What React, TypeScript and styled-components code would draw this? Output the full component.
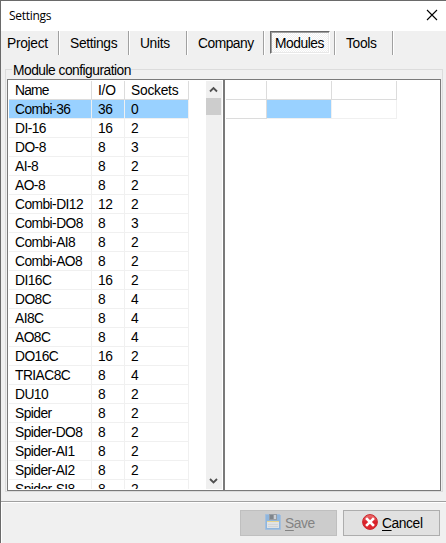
import React from "react";
import styled, { createGlobalStyle } from "styled-components";

const GlobalStyle = createGlobalStyle`
  *, *::before, *::after { box-sizing: border-box; }
  body {
    margin: 0;
    background: #f0f0f0;
    overflow: hidden;
    color: #000;
    font-family: "Liberation Sans", Arial, sans-serif;
    font-size: 13.8px;
  }
`;

const Window = styled.div`
  width: 446px;
  height: 543px;
  display: flex;
  flex-direction: column;
  background: #f0f0f0;
  border-top: 1px solid #6a6a6a;
  border-left: 1px solid #6a6a6a;
  overflow: hidden;
`;

const TitleBar = styled.header`
  height: 30px;
  flex: none;
  display: flex;
  justify-content: space-between;
  align-items: center;
  padding: 0 8px;
  background: #fff;
  font: 12px/30px "Open Sans", "Noto Sans", sans-serif;
  letter-spacing: -0.3px;
`;

const CloseIcon = styled.svg`
  width: 12px;
  height: 12px;
  display: block;
  margin-top: -2px;
`;

const TabBar = styled.nav`
  height: 32px;
  flex: none;
  display: flex;
  align-items: flex-start;
`;

const TabSlot = styled.div<{ $width: number }>`
  width: ${(p) => p.$width}px;
  height: 24px;
  display: flex;
  border-right: 1px solid #fff;
  box-shadow: inset -1px 0 0 #a0a0a0;
`;

const Tab = styled.button<{ $inset: number; $spacing: number }>`
  border: 0;
  background: none;
  padding: 0 0 0 ${(p) => p.$inset}px;
  font: inherit;
  line-height: 23px;
  letter-spacing: ${(p) => p.$spacing}px;
  color: #000;
  white-space: nowrap;
`;

const PressedTab = styled(Tab)`
  width: 60px;
  height: 23px;
  margin-left: 5px;
  text-align: left;
  border: 1px solid;
  border-color: #696969 #fff #fff #696969;
  box-shadow: inset 1px 1px 0 #a0a0a0, inset -1px -1px 0 #e8e8e8;
  background: repeating-conic-gradient(#fff 0 25%, #f0f0f0 0 50%) 0 0 / 2px 2px;
`;

const GroupBox = styled.section`
  width: 438px;
  height: 429px;
  flex: none;
  margin-left: 4px;
  display: grid;
  grid-template-rows: 16px 413px;
`;

const GroupTitle = styled.div`
  display: flex;
  align-items: center;
  line-height: 16px;
  letter-spacing: -0.51px;
  white-space: nowrap;

  &::before, &::after {
    content: "";
    height: 10px;
    align-self: flex-end;
    border-top: 1px solid #dcdcdc;
  }
  &::before {
    width: 7px;
    border-left: 1px solid #dcdcdc;
    margin-right: 1px;
  }
  &::after {
    flex: 1;
    border-right: 1px solid #dcdcdc;
  }
`;

const GroupBody = styled.div`
  display: grid;
  grid-template-columns: 217px 217px;
  border: 1px solid #dcdcdc;
  border-top: 0;
  padding: 0 1px 0;
`;

const Panel = styled.div`
  height: 412px;
  display: flex;
  align-items: flex-start;
  background: #fff;
  border: 1px solid #7a7a7a;
  padding: 1px;
  overflow: hidden;
`;

const ModuleGrid = styled.div`
  width: 197px;
  height: 408px;
  flex: none;
  overflow: hidden;
`;

const Row = styled.div<{ $selected?: boolean }>`
  display: grid;
  grid-template-columns: 83px 33px 64px;
  height: 19px;
  background: ${(p) => (p.$selected ? "#99d1ff" : "#fff")};
  width: 180px;
`;

const Cell = styled.div<{ $tight?: boolean }>`
  padding-left: 6px;
  line-height: 20px;
  height: 19px;
  letter-spacing: ${(p) => (p.$tight ? "-0.55px" : "-0.35px")};
  border-right: 1px solid #f0f0f0;
  border-bottom: 1px solid #f0f0f0;
  white-space: nowrap;
`;

const HeadCell = styled(Cell)`
  border-color: #dcdcdc;
  letter-spacing: ${(p) => (p.$tight ? "-0.8px" : "-0.25px")};
`;

const ScrollBar = styled.div`
  width: 16px;
  height: 408px;
  flex: none;
  display: flex;
  flex-direction: column;
  background: #f0f0f0;
`;

const ScrollThumb = styled.div`
  width: 15px;
  height: 17px;
  background: #cdcdcd;
`;

const ScrollArrow = styled.svg<{ $down?: boolean }>`
  width: 15px;
  height: 17px;
  display: block;
  flex: none;
  margin-top: ${(p) => (p.$down ? "auto" : "0")};
`;

const SocketGrid = styled.div`
  display: grid;
  grid-template-columns: 41px 65px 65px;
  grid-auto-rows: 19px;
`;

const SocketCell = styled.div<{ $fixed?: boolean; $selected?: boolean }>`
  border-right: 1px solid ${(p) => (p.$fixed ? "#dcdcdc" : "#f0f0f0")};
  border-bottom: 1px solid ${(p) => (p.$fixed ? "#dcdcdc" : "#f0f0f0")};
  background: ${(p) => (p.$selected ? "#99d1ff" : "#fff")};
  background-clip: padding-box;
`;

const Footer = styled.footer`
  flex: 1;
  margin-top: 9px;
  border-top: 1px solid #a0a0a0;
  box-shadow: inset 1px 1px 0 #fff;
  display: flex;
  justify-content: flex-end;
  align-items: flex-start;
  gap: 6px;
  padding: 8px 6px 0 0;
`;

const Button = styled.button`
  width: 97px;
  height: 26px;
  display: flex;
  align-items: center;
  padding: 0 0 0 18px;
  gap: 4px;
  border: 1px solid #adadad;
  background: #e1e1e1;
  font: inherit;
  letter-spacing: -0.4px;
  color: #000;
  &:disabled {
    padding-left: 24px;
    border-color: #bfbfbf;
    background: #ccc;
    color: #838383;
  }
`;

const ButtonIcon = styled.svg`
  width: 16px;
  height: 16px;
  flex: none;
  margin-top: -2px;
`;

const Mnemonic = styled.span`
  text-decoration: underline;
  text-decoration-thickness: 1px;
  text-underline-offset: 2px;
`;

const tabs = [
  { label: "Project", width: 59, inset: 6, spacing: -0.3 },
  { label: "Settings", width: 70, inset: 10, spacing: -0.32 },
  { label: "Units", width: 58, inset: 10, spacing: -0.35 },
  { label: "Company", width: 77, inset: 10, spacing: -0.5 },
  { label: "Modules", width: 71, inset: 4, spacing: -0.45, pressed: true },
  { label: "Tools", width: 58, inset: 10, spacing: -0.3 },
];

const modules: [string, number, number][] = [
  ["Combi-36", 36, 0],
  ["DI-16", 16, 2],
  ["DO-8", 8, 3],
  ["AI-8", 8, 2],
  ["AO-8", 8, 2],
  ["Combi-DI12", 12, 2],
  ["Combi-DO8", 8, 3],
  ["Combi-AI8", 8, 2],
  ["Combi-AO8", 8, 2],
  ["DI16C", 16, 2],
  ["DO8C", 8, 4],
  ["AI8C", 8, 4],
  ["AO8C", 8, 4],
  ["DO16C", 16, 2],
  ["TRIAC8C", 8, 4],
  ["DU10", 8, 2],
  ["Spider", 8, 2],
  ["Spider-DO8", 8, 2],
  ["Spider-AI1", 8, 2],
  ["Spider-AI2", 8, 2],
  ["Spider-SI8", 8, 2],
];

const SaveIcon = () => (
  <ButtonIcon viewBox="0 0 16 16">
    <path d="M.5 .5h14l1 1v14H.5z" fill="#8fb6de" stroke="#a3bfdd" />
    <path d="M4 0h8v6H4z" fill="#989da3" />
    <path d="M5 1h3v4H5z" fill="#7f858b" />
    <path d="M9 1h2v4H9z" fill="#cbd0d6" />
    <path d="M2 7h12v7H2z" fill="#e1e3e5" />
    <path d="M2 7h12v1H2z" fill="#e8d48e" />
    <path d="M3 10.5h10M3 12.5h10" stroke="#d2d5d8" />
  </ButtonIcon>
);

const CancelIcon = () => (
  <ButtonIcon viewBox="0 0 16 16">
    <defs>
      <linearGradient id="cancelFill" x1="0" y1="0" x2="0" y2="1">
        <stop offset="0" stopColor="#ef7777" />
        <stop offset=".5" stopColor="#d92029" />
        <stop offset="1" stopColor="#e32b30" />
      </linearGradient>
    </defs>
    <circle cx="8" cy="8" r="7.4" fill="url(#cancelFill)" stroke="#c9252b" />
    <path d="M5 5l6 6M11 5l-6 6" stroke="#fff" strokeWidth="2.6" strokeLinecap="square" />
  </ButtonIcon>
);

export default function App() {
  return (
    <>
      <GlobalStyle />
      <Window>
        <TitleBar>
          <span>Settings</span>
          <CloseIcon viewBox="0 0 12 12">
            <path d="M1 1l10 10M11 1L1 11" stroke="#000" strokeWidth="1.1" />
          </CloseIcon>
        </TitleBar>
        <TabBar>
          {tabs.map((t) => {
            const Part = t.pressed ? PressedTab : Tab;
            return (
              <TabSlot key={t.label} $width={t.width}>
                <Part $inset={t.inset} $spacing={t.spacing}>{t.label}</Part>
              </TabSlot>
            );
          })}
        </TabBar>
        <GroupBox>
          <GroupTitle>Module configuration</GroupTitle>
          <GroupBody>
            <Panel>
              <ModuleGrid>
                <Row>
                  <HeadCell $tight>Name</HeadCell>
                  <HeadCell>I/O</HeadCell>
                  <HeadCell>Sockets</HeadCell>
                </Row>
                {modules.map(([name, io, sockets], i) => (
                  <Row key={name} $selected={i === 0}>
                    <Cell $tight>{name}</Cell>
                    <Cell>{io}</Cell>
                    <Cell>{sockets}</Cell>
                  </Row>
                ))}
              </ModuleGrid>
              <ScrollBar>
                <ScrollArrow viewBox="0 0 15 17">
                  <path d="M4 10.5l3.5-3.5 3.5 3.5" fill="none" stroke="#505050" strokeWidth="1.8" />
                </ScrollArrow>
                <ScrollThumb />
                <ScrollArrow $down viewBox="0 0 15 17">
                  <path d="M4 7l3.5 3.5L11 7" fill="none" stroke="#505050" strokeWidth="1.8" />
                </ScrollArrow>
              </ScrollBar>
            </Panel>
            <Panel>
              <SocketGrid>
                <SocketCell $fixed />
                <SocketCell $fixed />
                <SocketCell $fixed />
                <SocketCell $fixed />
                <SocketCell $selected />
                <SocketCell />
              </SocketGrid>
            </Panel>
          </GroupBody>
        </GroupBox>
        <Footer>
          <Button disabled>
            <SaveIcon />
            <span><Mnemonic>S</Mnemonic>ave</span>
          </Button>
          <Button>
            <CancelIcon />
            <span><Mnemonic>C</Mnemonic>ancel</span>
          </Button>
        </Footer>
      </Window>
    </>
  );
}
